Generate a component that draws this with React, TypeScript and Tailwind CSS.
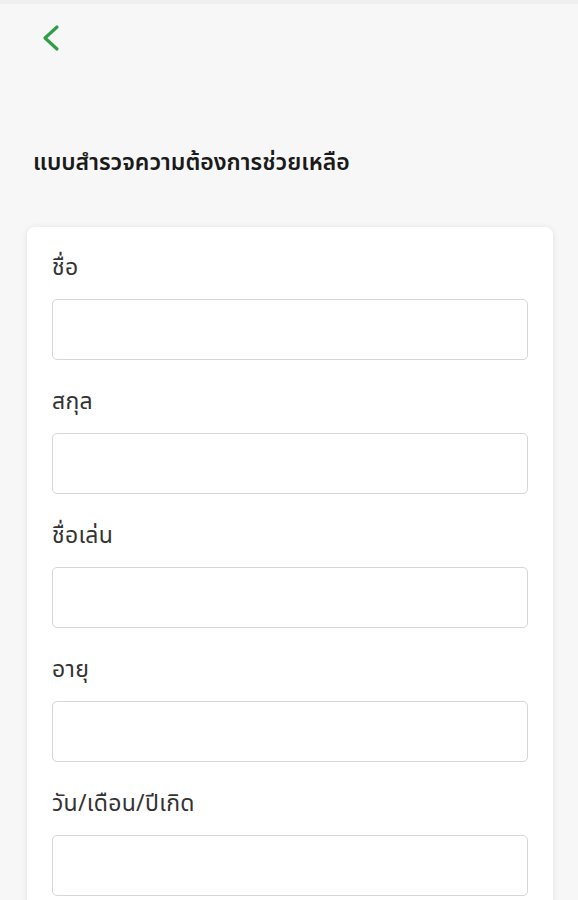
const fields = ["ชื่อ", "สกุล", "ชื่อเล่น", "อายุ", "วัน/เดือน/ปีเกิด"];

export default function App() {
  return (
    <div
      className="h-[900px] overflow-hidden bg-[#f7f7f7] border-t-4 border-[#efefef]"
      style={{ fontFamily: '"Noto Sans Thai", "Noto Sans", "DejaVu Sans", sans-serif' }}
    >
      <div className="h-[72px] pl-[41px] pt-[20px]">
        <button className="block">
          <svg width="22" height="30" viewBox="0 0 22 30" fill="none">
            <path
              d="M16 3 L4 14 L16 25"
              stroke="#2f9e48"
              strokeWidth="3.2"
              strokeLinecap="round"
              strokeLinejoin="round"
            />
          </svg>
        </button>
      </div>
      <h1 className="mt-[72px] pl-[33px] text-[23px] leading-[30px] font-semibold text-[#1a1a1a]">
        แบบสำรวจความต้องการช่วยเหลือ
      </h1>
      <div className="mt-[49px] ml-[27px] mr-[25px] bg-white rounded-[8px] shadow-[0_1px_6px_rgba(0,0,0,0.1)] px-[25px] pt-[27px] pb-[40px] flex flex-col gap-[28px]">
        {fields.map((label) => (
          <div key={label} className="flex flex-col gap-[17px]">
            <label className="text-[23px] leading-[28px] tracking-[0.3px] text-[#333333]">{label}</label>
            <input
              type="text"
              className="h-[61px] w-full rounded-[5px] border border-[#d6d6d6] bg-white px-3 outline-none"
            />
          </div>
        ))}
      </div>
    </div>
  );
}
